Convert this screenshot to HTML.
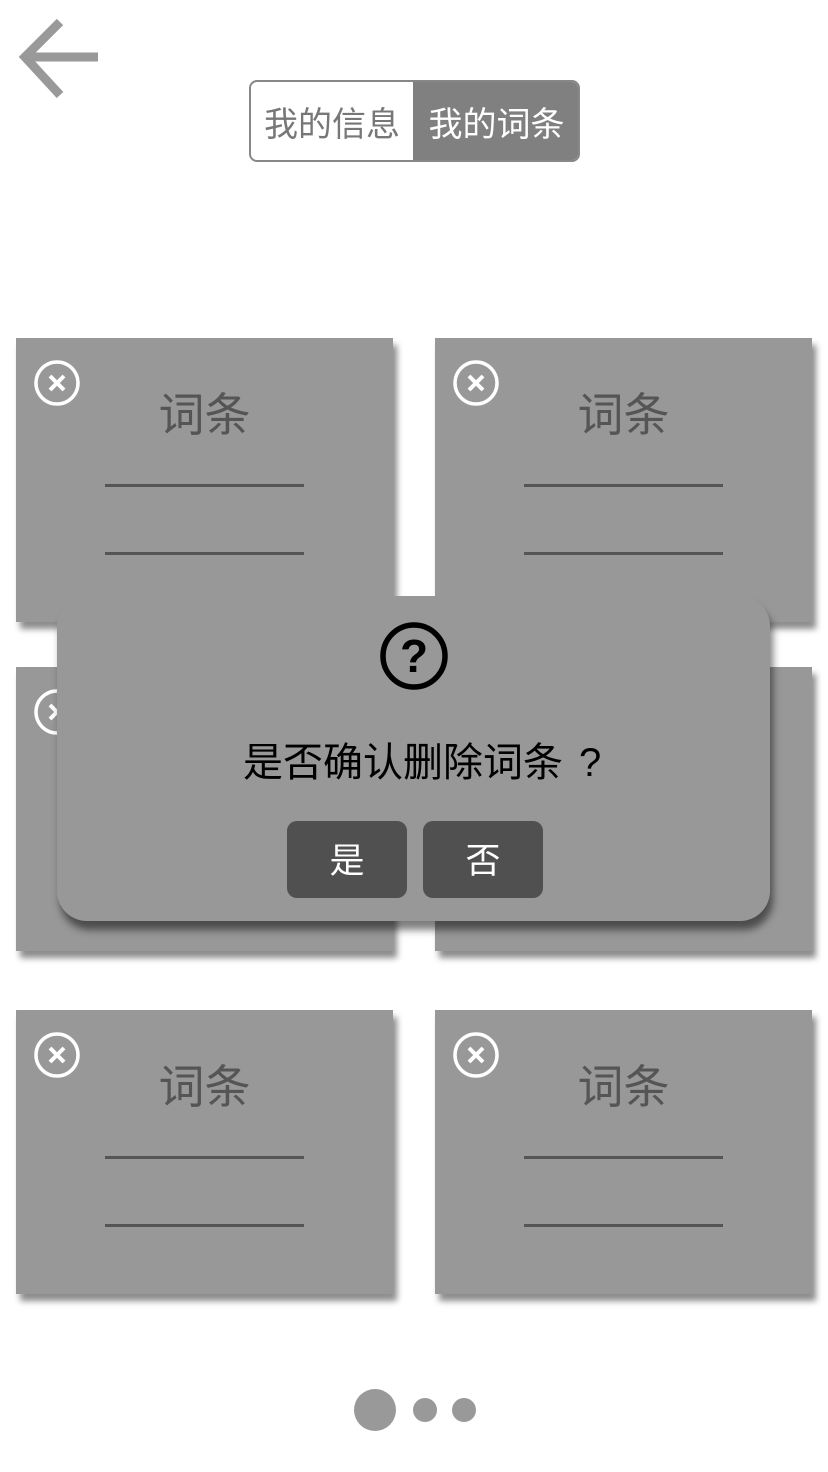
<!DOCTYPE html>
<html><head><meta charset="utf-8"><style>
*{margin:0;padding:0;box-sizing:border-box}
body{width:828px;height:1472px;background:#fff;position:relative;overflow:hidden;font-family:"Liberation Sans","Noto Sans CJK SC",sans-serif}
.abs{position:absolute}
.card{position:absolute;width:377px;height:284px;background:#989898;box-shadow:4px 7px 6px rgba(0,0,0,.45)}
.card .t{position:absolute;left:0;right:0;top:49px;text-align:center;font-size:46px;line-height:56px;color:#555}
.card .l{position:absolute;left:89px;width:199px;height:3px;background:#555}
.card svg{position:absolute;left:18px;top:22px}
.dot{position:absolute;border-radius:50%;background:#999}
</style></head><body>
<svg class="abs" style="left:0;top:0" width="110" height="110"><path d="M98 57H28M60 22L25 57L60 95" fill="none" stroke="#999" stroke-width="9"/></svg>
<div class="abs" style="left:249px;top:80px;width:331px;height:82px;border:2px solid #888;border-radius:8px;overflow:hidden;background:#fff">
<div class="abs" style="left:0;top:4px;width:162px;height:78px;font-size:34px;line-height:78px;text-align:center;color:#777">我的信息</div>
<div class="abs" style="left:162px;top:0;width:167px;height:78px;background:#808080;font-size:34px;line-height:86px;text-align:center;color:#fff">我的词条</div>
</div>
<div class="card" style="left:16px;top:338px"><svg width="46" height="46"><circle cx="23" cy="23" r="21" fill="none" stroke="#fff" stroke-width="3.5"/><path d="M16 16L30 30M30 16L16 30" stroke="#fff" stroke-width="4"/></svg><div class="t">词条</div><div class="l" style="top:146px"></div><div class="l" style="top:214px"></div></div>
<div class="card" style="left:435px;top:338px"><svg width="46" height="46"><circle cx="23" cy="23" r="21" fill="none" stroke="#fff" stroke-width="3.5"/><path d="M16 16L30 30M30 16L16 30" stroke="#fff" stroke-width="4"/></svg><div class="t">词条</div><div class="l" style="top:146px"></div><div class="l" style="top:214px"></div></div>
<div class="card" style="left:16px;top:667px"><svg width="46" height="46"><circle cx="23" cy="23" r="21" fill="none" stroke="#fff" stroke-width="3.5"/><path d="M16 16L30 30M30 16L16 30" stroke="#fff" stroke-width="4"/></svg></div>
<div class="card" style="left:435px;top:667px"></div>
<div class="card" style="left:16px;top:1010px"><svg width="46" height="46"><circle cx="23" cy="23" r="21" fill="none" stroke="#fff" stroke-width="3.5"/><path d="M16 16L30 30M30 16L16 30" stroke="#fff" stroke-width="4"/></svg><div class="t">词条</div><div class="l" style="top:146px"></div><div class="l" style="top:214px"></div></div>
<div class="card" style="left:435px;top:1010px"><svg width="46" height="46"><circle cx="23" cy="23" r="21" fill="none" stroke="#fff" stroke-width="3.5"/><path d="M16 16L30 30M30 16L16 30" stroke="#fff" stroke-width="4"/></svg><div class="t">词条</div><div class="l" style="top:146px"></div><div class="l" style="top:214px"></div></div>
<div class="abs" style="left:57px;top:596px;width:713px;height:325px;background:#989898;border-radius:30px;box-shadow:3px 9px 8px rgba(0,0,0,.5)">
<svg class="abs" style="left:322px;top:25px" width="70" height="70"><circle cx="35" cy="35" r="31" fill="none" stroke="#000" stroke-width="5.5"/><text x="35" y="51" text-anchor="middle" font-family="Liberation Sans" font-weight="bold" font-size="46" fill="#000">?</text></svg>
<div class="abs" style="left:186px;top:142px;white-space:nowrap;font-size:40px;line-height:50px;color:#000">是否确认删除词条<span style="margin-left:16px">?</span></div>
<div class="abs" style="left:230px;top:225px;width:120px;height:77px;background:#505050;border-radius:10px;color:#fff;font-size:35px;line-height:82px;text-align:center">是</div>
<div class="abs" style="left:366px;top:225px;width:120px;height:77px;background:#505050;border-radius:10px;color:#fff;font-size:35px;line-height:82px;text-align:center">否</div>
</div>
<div class="dot" style="left:354px;top:1389px;width:42px;height:42px"></div>
<div class="dot" style="left:413px;top:1398px;width:24px;height:24px"></div>
<div class="dot" style="left:452px;top:1398px;width:24px;height:24px"></div>
</body></html>
